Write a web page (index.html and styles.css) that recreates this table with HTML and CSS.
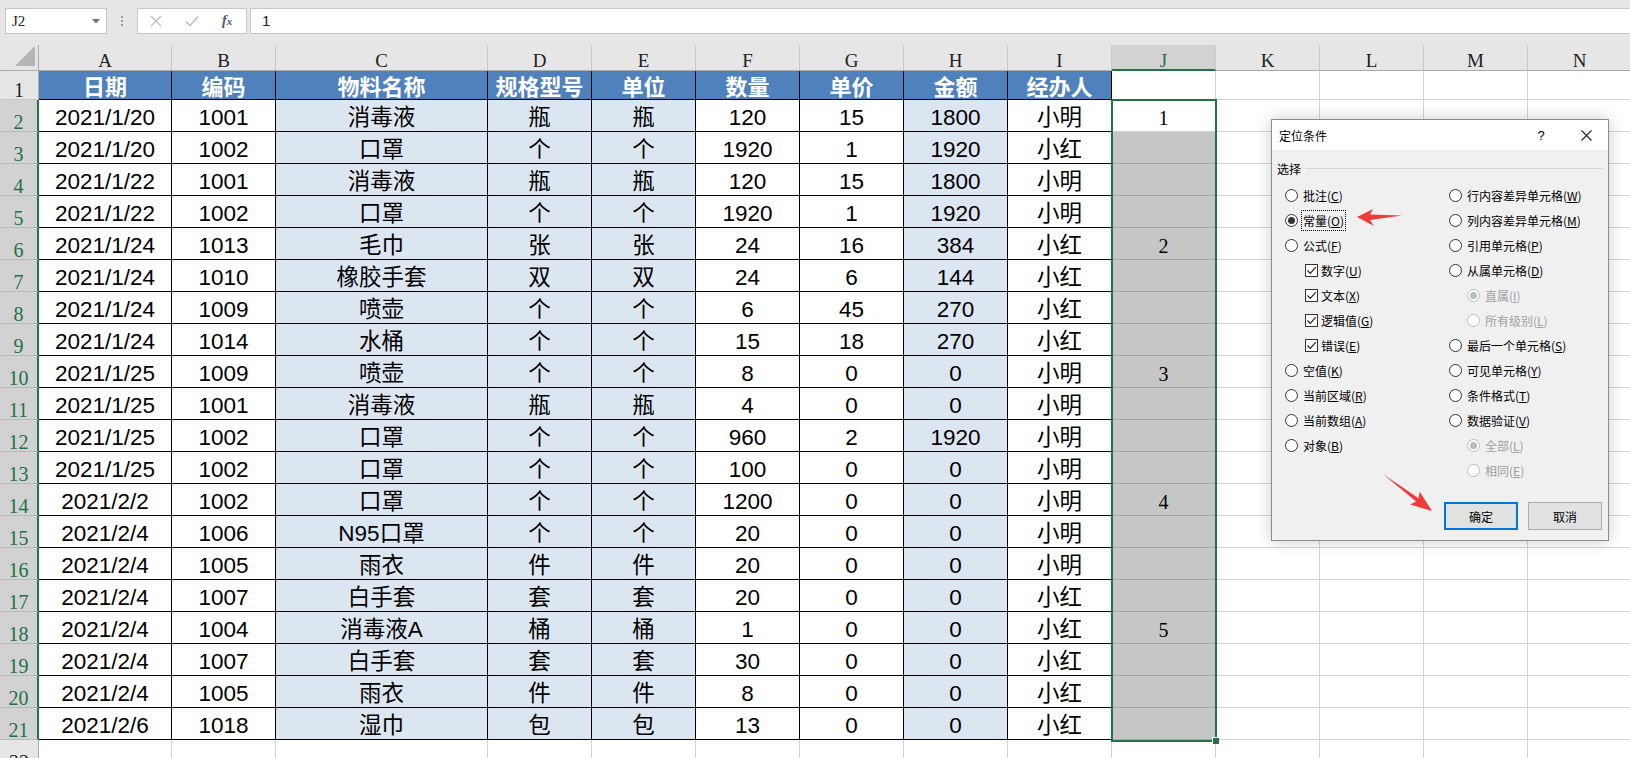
FILE: index.html
```html
<!DOCTYPE html>
<html lang="zh-CN">
<head>
<meta charset="utf-8">
<title>定位条件</title>
<link rel="stylesheet" href="styles.css">
</head>
<body>
<div class="app">
  <div class="topbar">
    <div class="namebox"><span>J2</span><svg class="dd" width="8" height="5" viewBox="0 0 8 5"><path d="M0 0H8L4 4.5Z" fill="#707070"/></svg></div>
    <div class="dots"><i></i><i></i><i></i></div>
    <div class="fbtns">
      <svg width="12" height="12" viewBox="0 0 12 12"><path d="M1 1L11 11M11 1L1 11" stroke="#bdbdbd" stroke-width="1.3" fill="none"/></svg>
      <svg width="14" height="12" viewBox="0 0 14 12"><path d="M1 6.5L5 10.5L13 1.5" stroke="#bdbdbd" stroke-width="1.5" fill="none"/></svg>
      <span class="fx">f<small>x</small></span>
    </div>
    <div class="finput">1</div>
  </div>

  <div class="sheet">
    <div class="row hdr">
      <div class="corner"><svg width="20" height="20" viewBox="0 0 20 20"><path d="M20 0V20H0Z" fill="#b4b4b4"/></svg></div>
      <div class="ch">A</div><div class="ch">B</div><div class="ch">C</div><div class="ch">D</div><div class="ch">E</div><div class="ch">F</div><div class="ch">G</div><div class="ch">H</div><div class="ch">I</div><div class="ch s">J</div><div class="ch">K</div><div class="ch">L</div><div class="ch">M</div><div class="ch">N</div>
    </div>
    <div class="row r1">
      <div class="rh">1</div>
      <div class="c t hd">日期</div><div class="c t hd">编码</div><div class="c t hd">物料名称</div><div class="c t hd">规格型号</div><div class="c t hd">单位</div><div class="c t hd">数量</div><div class="c t hd">单价</div><div class="c t hd">金额</div><div class="c t hd">经办人</div><div class="c"></div><div class="c"></div><div class="c"></div><div class="c"></div><div class="c"></div>
    </div>
    <div class="row"><div class="rh s">2</div><div class="c t">2021/1/20</div><div class="c t">1001</div><div class="c t lb">消毒液</div><div class="c t lb">瓶</div><div class="c t lb">瓶</div><div class="c t">120</div><div class="c t">15</div><div class="c t lb">1800</div><div class="c t">小明</div><div class="c jw">1</div><div class="c"></div><div class="c"></div><div class="c"></div><div class="c"></div></div>
    <div class="row"><div class="rh s">3</div><div class="c t">2021/1/20</div><div class="c t">1002</div><div class="c t lb">口罩</div><div class="c t lb">个</div><div class="c t lb">个</div><div class="c t">1920</div><div class="c t">1</div><div class="c t lb">1920</div><div class="c t">小红</div><div class="c jg"></div><div class="c"></div><div class="c"></div><div class="c"></div><div class="c"></div></div>
    <div class="row"><div class="rh s">4</div><div class="c t">2021/1/22</div><div class="c t">1001</div><div class="c t lb">消毒液</div><div class="c t lb">瓶</div><div class="c t lb">瓶</div><div class="c t">120</div><div class="c t">15</div><div class="c t lb">1800</div><div class="c t">小明</div><div class="c jg"></div><div class="c"></div><div class="c"></div><div class="c"></div><div class="c"></div></div>
    <div class="row"><div class="rh s">5</div><div class="c t">2021/1/22</div><div class="c t">1002</div><div class="c t lb">口罩</div><div class="c t lb">个</div><div class="c t lb">个</div><div class="c t">1920</div><div class="c t">1</div><div class="c t lb">1920</div><div class="c t">小明</div><div class="c jg"></div><div class="c"></div><div class="c"></div><div class="c"></div><div class="c"></div></div>
    <div class="row"><div class="rh s">6</div><div class="c t">2021/1/24</div><div class="c t">1013</div><div class="c t lb">毛巾</div><div class="c t lb">张</div><div class="c t lb">张</div><div class="c t">24</div><div class="c t">16</div><div class="c t lb">384</div><div class="c t">小红</div><div class="c jg">2</div><div class="c"></div><div class="c"></div><div class="c"></div><div class="c"></div></div>
    <div class="row"><div class="rh s">7</div><div class="c t">2021/1/24</div><div class="c t">1010</div><div class="c t lb">橡胶手套</div><div class="c t lb">双</div><div class="c t lb">双</div><div class="c t">24</div><div class="c t">6</div><div class="c t lb">144</div><div class="c t">小红</div><div class="c jg"></div><div class="c"></div><div class="c"></div><div class="c"></div><div class="c"></div></div>
    <div class="row"><div class="rh s">8</div><div class="c t">2021/1/24</div><div class="c t">1009</div><div class="c t lb">喷壶</div><div class="c t lb">个</div><div class="c t lb">个</div><div class="c t">6</div><div class="c t">45</div><div class="c t lb">270</div><div class="c t">小红</div><div class="c jg"></div><div class="c"></div><div class="c"></div><div class="c"></div><div class="c"></div></div>
    <div class="row"><div class="rh s">9</div><div class="c t">2021/1/24</div><div class="c t">1014</div><div class="c t lb">水桶</div><div class="c t lb">个</div><div class="c t lb">个</div><div class="c t">15</div><div class="c t">18</div><div class="c t lb">270</div><div class="c t">小红</div><div class="c jg"></div><div class="c"></div><div class="c"></div><div class="c"></div><div class="c"></div></div>
    <div class="row"><div class="rh s">10</div><div class="c t">2021/1/25</div><div class="c t">1009</div><div class="c t lb">喷壶</div><div class="c t lb">个</div><div class="c t lb">个</div><div class="c t">8</div><div class="c t">0</div><div class="c t lb">0</div><div class="c t">小明</div><div class="c jg">3</div><div class="c"></div><div class="c"></div><div class="c"></div><div class="c"></div></div>
    <div class="row"><div class="rh s">11</div><div class="c t">2021/1/25</div><div class="c t">1001</div><div class="c t lb">消毒液</div><div class="c t lb">瓶</div><div class="c t lb">瓶</div><div class="c t">4</div><div class="c t">0</div><div class="c t lb">0</div><div class="c t">小明</div><div class="c jg"></div><div class="c"></div><div class="c"></div><div class="c"></div><div class="c"></div></div>
    <div class="row"><div class="rh s">12</div><div class="c t">2021/1/25</div><div class="c t">1002</div><div class="c t lb">口罩</div><div class="c t lb">个</div><div class="c t lb">个</div><div class="c t">960</div><div class="c t">2</div><div class="c t lb">1920</div><div class="c t">小明</div><div class="c jg"></div><div class="c"></div><div class="c"></div><div class="c"></div><div class="c"></div></div>
    <div class="row"><div class="rh s">13</div><div class="c t">2021/1/25</div><div class="c t">1002</div><div class="c t lb">口罩</div><div class="c t lb">个</div><div class="c t lb">个</div><div class="c t">100</div><div class="c t">0</div><div class="c t lb">0</div><div class="c t">小明</div><div class="c jg"></div><div class="c"></div><div class="c"></div><div class="c"></div><div class="c"></div></div>
    <div class="row"><div class="rh s">14</div><div class="c t">2021/2/2</div><div class="c t">1002</div><div class="c t lb">口罩</div><div class="c t lb">个</div><div class="c t lb">个</div><div class="c t">1200</div><div class="c t">0</div><div class="c t lb">0</div><div class="c t">小明</div><div class="c jg">4</div><div class="c"></div><div class="c"></div><div class="c"></div><div class="c"></div></div>
    <div class="row"><div class="rh s">15</div><div class="c t">2021/2/4</div><div class="c t">1006</div><div class="c t lb">N95口罩</div><div class="c t lb">个</div><div class="c t lb">个</div><div class="c t">20</div><div class="c t">0</div><div class="c t lb">0</div><div class="c t">小明</div><div class="c jg"></div><div class="c"></div><div class="c"></div><div class="c"></div><div class="c"></div></div>
    <div class="row"><div class="rh s">16</div><div class="c t">2021/2/4</div><div class="c t">1005</div><div class="c t lb">雨衣</div><div class="c t lb">件</div><div class="c t lb">件</div><div class="c t">20</div><div class="c t">0</div><div class="c t lb">0</div><div class="c t">小明</div><div class="c jg"></div><div class="c"></div><div class="c"></div><div class="c"></div><div class="c"></div></div>
    <div class="row"><div class="rh s">17</div><div class="c t">2021/2/4</div><div class="c t">1007</div><div class="c t lb">白手套</div><div class="c t lb">套</div><div class="c t lb">套</div><div class="c t">20</div><div class="c t">0</div><div class="c t lb">0</div><div class="c t">小红</div><div class="c jg"></div><div class="c"></div><div class="c"></div><div class="c"></div><div class="c"></div></div>
    <div class="row"><div class="rh s">18</div><div class="c t">2021/2/4</div><div class="c t">1004</div><div class="c t lb">消毒液A</div><div class="c t lb">桶</div><div class="c t lb">桶</div><div class="c t">1</div><div class="c t">0</div><div class="c t lb">0</div><div class="c t">小红</div><div class="c jg">5</div><div class="c"></div><div class="c"></div><div class="c"></div><div class="c"></div></div>
    <div class="row"><div class="rh s">19</div><div class="c t">2021/2/4</div><div class="c t">1007</div><div class="c t lb">白手套</div><div class="c t lb">套</div><div class="c t lb">套</div><div class="c t">30</div><div class="c t">0</div><div class="c t lb">0</div><div class="c t">小红</div><div class="c jg"></div><div class="c"></div><div class="c"></div><div class="c"></div><div class="c"></div></div>
    <div class="row"><div class="rh s">20</div><div class="c t">2021/2/4</div><div class="c t">1005</div><div class="c t lb">雨衣</div><div class="c t lb">件</div><div class="c t lb">件</div><div class="c t">8</div><div class="c t">0</div><div class="c t lb">0</div><div class="c t">小红</div><div class="c jg"></div><div class="c"></div><div class="c"></div><div class="c"></div><div class="c"></div></div>
    <div class="row"><div class="rh s">21</div><div class="c t">2021/2/6</div><div class="c t">1018</div><div class="c t lb">湿巾</div><div class="c t lb">包</div><div class="c t lb">包</div><div class="c t">13</div><div class="c t">0</div><div class="c t lb">0</div><div class="c t">小红</div><div class="c jg"></div><div class="c"></div><div class="c"></div><div class="c"></div><div class="c"></div></div>
    <div class="row"><div class="rh">22</div><div class="c"></div><div class="c"></div><div class="c"></div><div class="c"></div><div class="c"></div><div class="c"></div><div class="c"></div><div class="c"></div><div class="c"></div><div class="c"></div><div class="c"></div><div class="c"></div><div class="c"></div><div class="c"></div></div>

    <div class="selbox"><i class="handle"></i></div>
  </div>

  <div class="dlg">
    <div class="dlg-title">
      <span class="dlg-name">定位条件</span>
      <span class="dlg-help">?</span>
      <span class="dlg-close"><svg width="11" height="11" viewBox="0 0 11 11"><path d="M0.5 0.5L10.5 10.5M10.5 0.5L0.5 10.5" stroke="#222" stroke-width="1.1" fill="none"/></svg></span>
    </div>
    <div class="dlg-body">
      <div class="grp"><span>选择</span><i class="grp-line"></i></div>
      <div class="opts">
        <div class="col">
          <div class="opt"><i class="rb"></i><span>批注(<u>C</u>)</span></div>
          <div class="opt"><i class="rb on"></i><span class="focus">常量(<u>O</u>)</span></div>
          <div class="opt"><i class="rb"></i><span>公式(<u>F</u>)</span></div>
          <div class="opt subc"><i class="cb"><svg width="11" height="11" viewBox="0 0 11 11"><path d="M1.5 5.5L4.3 8.3L9.8 2.2" stroke="#222" stroke-width="1.2" fill="none"/></svg></i><span>数字(<u>U</u>)</span></div>
          <div class="opt subc"><i class="cb"><svg width="11" height="11" viewBox="0 0 11 11"><path d="M1.5 5.5L4.3 8.3L9.8 2.2" stroke="#222" stroke-width="1.2" fill="none"/></svg></i><span>文本(<u>X</u>)</span></div>
          <div class="opt subc"><i class="cb"><svg width="11" height="11" viewBox="0 0 11 11"><path d="M1.5 5.5L4.3 8.3L9.8 2.2" stroke="#222" stroke-width="1.2" fill="none"/></svg></i><span>逻辑值(<u>G</u>)</span></div>
          <div class="opt subc"><i class="cb"><svg width="11" height="11" viewBox="0 0 11 11"><path d="M1.5 5.5L4.3 8.3L9.8 2.2" stroke="#222" stroke-width="1.2" fill="none"/></svg></i><span>错误(<u>E</u>)</span></div>
          <div class="opt"><i class="rb"></i><span>空值(<u>K</u>)</span></div>
          <div class="opt"><i class="rb"></i><span>当前区域(<u>R</u>)</span></div>
          <div class="opt"><i class="rb"></i><span>当前数组(<u>A</u>)</span></div>
          <div class="opt"><i class="rb"></i><span>对象(<u>B</u>)</span></div>
        </div>
        <div class="col">
          <div class="opt"><i class="rb"></i><span>行内容差异单元格(<u>W</u>)</span></div>
          <div class="opt"><i class="rb"></i><span>列内容差异单元格(<u>M</u>)</span></div>
          <div class="opt"><i class="rb"></i><span>引用单元格(<u>P</u>)</span></div>
          <div class="opt"><i class="rb"></i><span>从属单元格(<u>D</u>)</span></div>
          <div class="opt subr dis"><i class="rb on"></i><span>直属(<u>I</u>)</span></div>
          <div class="opt subr dis"><i class="rb"></i><span>所有级别(<u>L</u>)</span></div>
          <div class="opt"><i class="rb"></i><span>最后一个单元格(<u>S</u>)</span></div>
          <div class="opt"><i class="rb"></i><span>可见单元格(<u>Y</u>)</span></div>
          <div class="opt"><i class="rb"></i><span>条件格式(<u>T</u>)</span></div>
          <div class="opt"><i class="rb"></i><span>数据验证(<u>V</u>)</span></div>
          <div class="opt subr dis"><i class="rb on"></i><span>全部(<u>L</u>)</span></div>
          <div class="opt subr dis"><i class="rb"></i><span>相同(<u>E</u>)</span></div>
        </div>
      </div>
      <div class="btns"><button class="btn def">确定</button><button class="btn">取消</button></div>
    </div>
  </div>

  <svg class="arrows" width="1630" height="758" viewBox="0 0 1630 758">
    <polygon points="1357,217 1373,209 1370,214.5 1402,215.5 1370,220 1374,226" fill="#ef3b3b"/>
    <polygon points="1383,474 1418.5,498.3 1419.7,491.7 1432,511 1410.1,504.5 1416.1,501.5" fill="#ef3b3b"/>
  </svg>
</div>
</body>
</html>
```

FILE: styles.css
```css
* { box-sizing: border-box; margin: 0; padding: 0; }
html, body { width: 1630px; height: 758px; overflow: hidden; background: #fff; }
body { font-family: "Liberation Sans", "Noto Sans CJK SC", sans-serif; }

.app { width: 1630px; height: 758px; position: relative; overflow: hidden; background: #e6e6e6; }

/* formula bar */
.topbar { height: 45px; display: flex; align-items: flex-start; padding: 8px 0 0 5px; }
.namebox { width: 102px; height: 26px; background: #fff; border: 1px solid #c6c6c6; display: flex; align-items: center; justify-content: space-between; padding: 0 6px 0 6px; font: 15px "Liberation Serif", serif; color: #222; }
.dots { width: 30px; height: 26px; display: flex; flex-direction: column; align-items: center; justify-content: center; gap: 2px; }
.dots i { width: 2px; height: 2px; background: #9a9a9a; display: block; }
.fbtns { width: 110px; height: 26px; background: #fff; border: 1px solid #c6c6c6; display: flex; align-items: center; gap: 23px; padding-left: 12px; }
.fx { font: italic bold 14px "Liberation Serif", serif; color: #555; }
.fx small { font-size: 11px; }
.finput { flex: 1; margin-left: 3px; height: 26px; background: #fff; border: 1px solid #c6c6c6; border-right: 0; padding-left: 11px; font: 15px/24px "Liberation Sans", sans-serif; color: #222; }

/* sheet */
.sheet { position: relative; background: #fff; }
.row { display: grid; grid-template-columns: 39px 133px 104px 212px repeat(11, 104px); height: 32px; width: 1632px; }
.row.hdr { height: 26px; }
.row.r1 { height: 29px; }

.corner { background: #e6e6e6; border-right: 1px solid #ababab; border-bottom: 1px solid #ababab; display: flex; align-items: flex-end; justify-content: flex-end; padding: 0 3px 4px 0; }
.ch { background: #e6e6e6; border-right: 1px solid #c8c8c8; border-bottom: 1px solid #ababab; display: flex; align-items: flex-end; justify-content: center; font: 19px/17px "Liberation Serif", serif; color: #222; padding-bottom: 1px; }
.ch.s { background: #d2d2d2; color: #217346; border-bottom: 2px solid #217346; padding-bottom: 0; }

.rh { background: #e6e6e6; border-right: 1px solid #ababab; border-bottom: 1px solid #c8c8c8; display: flex; align-items: flex-end; justify-content: center; font: 20px/17px "Liberation Serif", serif; color: #222; }
.rh.s { background: #d2d2d2; color: #217346; border-right: 2px solid #217346; border-bottom-color: #b9b9b9; }

.c { border-right: 1px solid #d4d4d4; border-bottom: 1px solid #d4d4d4; display: flex; align-items: center; justify-content: center; padding-top: 4px; font: 22.5px/26px "Liberation Sans", "Noto Sans CJK SC", sans-serif; color: #000; white-space: nowrap; }
.c.t { border-right-color: #000; border-bottom-color: #000; }
.c.lb { background: #dce6f1; }
.c.hd { background: #4f81bd; color: #fff; font: bold 22px/28px "Noto Sans CJK SC", sans-serif; padding-top: 0; }
.c.jw, .c.jg { font: 20px/26px "Liberation Serif", serif; }
.c.jg { background: #c6c6c6; border-bottom-color: #a6a6a6; border-right-color: #a6a6a6; }

.selbox { position: absolute; left: 1111px; top: 54px; width: 106px; height: 643px; border: 2px solid #217346; pointer-events: none; }
.handle { position: absolute; right: -4px; bottom: -4px; width: 7px; height: 7px; background: #217346; border-left: 1px solid #fff; border-top: 1px solid #fff; display: block; }

/* dialog */
.dlg { position: absolute; left: 1271px; top: 119px; width: 338px; height: 422px; border: 1px solid #8c8c8c; background: #f0f0f0; box-shadow: 0 0 14px rgba(0,0,0,0.22); display: flex; flex-direction: column; font: 12px "Noto Sans CJK SC", sans-serif; color: #000; }
.dlg-title { height: 30px; background: #fff; display: flex; align-items: center; padding: 0 12px 0 7px; flex: none; }
.dlg-name { flex: 1; font-size: 12px; }
.dlg-help { width: 20px; text-align: center; font: 13px "Liberation Sans", sans-serif; margin-right: 25px; }
.dlg-close { width: 20px; display: flex; justify-content: center; }
.dlg-body { flex: 1; display: flex; flex-direction: column; }
.grp { height: 20px; margin: 8px 5px 0 5px; display: flex; align-items: center; gap: 5px; }
.grp-line { flex: 1; height: 1px; background: #d5d5d5; display: block; }
.opts { display: grid; grid-template-columns: 164px 1fr; margin: 5px 0 0 13px; }
.opt { height: 25px; display: flex; align-items: center; gap: 5px; white-space: nowrap; }
.opt.subc { margin-left: 20px; gap: 3px; }
.opt.subr { margin-left: 18px; gap: 5px; }
.opt.dis { color: #a0a0a0; }
.opt u { text-underline-offset: 1px; }
.rb { width: 13px; height: 13px; border: 1px solid #333; border-radius: 50%; background: #fff; display: flex; align-items: center; justify-content: center; flex: none; }
.rb.on::after { content: ""; width: 7px; height: 7px; border-radius: 50%; background: #333; display: block; }
.opt.dis .rb { border-color: #bcbcbc; }
.opt.dis .rb.on::after { background: #bcbcbc; }
.cb { width: 13px; height: 13px; border: 1px solid #333; background: #fff; display: flex; align-items: center; justify-content: center; flex: none; }
.focus { outline: 1px dotted #000; outline-offset: 1px; }
.btns { margin-top: auto; display: flex; justify-content: flex-end; gap: 10px; padding: 0 6px 10px 0; }
.btn { width: 74px; height: 28px; background: #e1e1e1; border: 1px solid #adadad; font: 12px "Noto Sans CJK SC", sans-serif; color: #000; }
.btn.def { border: 2px solid #0078d7; }

.arrows { position: absolute; left: 0; top: 0; pointer-events: none; }
```
